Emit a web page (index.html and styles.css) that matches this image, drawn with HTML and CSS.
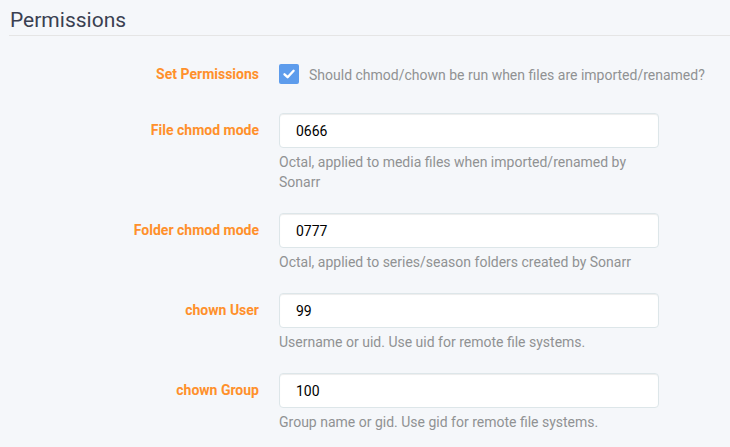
FILE: index.html
```html
<html>
  <head>
    <title>Media Management - Sonarr</title>
    <link rel="stylesheet" href="styles.css">
  </head>
  <body>
    <div class="section">
      <h2 class="legend">Permissions</h2>

      <div class="form-group">
        <label class="form-label">Set Permissions</label>
        <div class="form-input check-row">
          <span class="checkbox">
            <svg width="14" height="14" viewBox="0 0 14 14">
              <path d="M2.5 7.3 L5.6 10.2 L11.6 3.8" fill="none" stroke="#fff" stroke-width="2.4" stroke-linecap="round" stroke-linejoin="round"/>
            </svg>
          </span>
          <span class="check-help">Should chmod/chown be run when files are imported/renamed?</span>
        </div>
      </div>

      <div class="form-group">
        <label class="form-label">File chmod mode</label>
        <div class="form-input">
          <input type="text" class="text-input" value="0666">
          <div class="help">Octal, applied to media files when imported/renamed by Sonarr</div>
        </div>
      </div>

      <div class="form-group">
        <label class="form-label">Folder chmod mode</label>
        <div class="form-input">
          <input type="text" class="text-input" value="0777">
          <div class="help">Octal, applied to series/season folders created by Sonarr</div>
        </div>
      </div>

      <div class="form-group">
        <label class="form-label">chown User</label>
        <div class="form-input">
          <input type="text" class="text-input" value="99">
          <div class="help">Username or uid. Use uid for remote file systems.</div>
        </div>
      </div>

      <div class="form-group">
        <label class="form-label">chown Group</label>
        <div class="form-input">
          <input type="text" class="text-input" value="100">
          <div class="help">Group name or gid. Use gid for remote file systems.</div>
        </div>
      </div>
    </div>
  </body>
</html>
```

FILE: styles.css
```css
/* page */
body {
  margin: 0;
  padding: 0 0 0 9px;
  background-color: #f5f7fa;
  font-family: Roboto, "Open Sans", sans-serif;
  font-size: 14px;
  overflow: hidden;
}

.legend {
  margin: 5px 0 21px 0;
  padding: 0 0 0 1px;
  font-size: 21px;
  font-weight: normal;
  line-height: 30px;
  color: #3a3f51;
  border-bottom: 1px solid #e5e5e5;
}

/* form rows */
.form-group {
  display: flex;
  margin-bottom: 21px;
}

.form-label {
  flex: 0 0 250px;
  margin-right: 20px;
  line-height: 35px;
  text-align: right;
  font-weight: bold;
  color: #ff902b;
}

.form-input {
  width: 380px;
}

.check-row {
  display: flex;
  align-items: center;
  height: 35px;
  width: auto;
}

.checkbox {
  display: flex;
  align-items: center;
  justify-content: center;
  width: 20px;
  height: 20px;
  border-radius: 2px;
  background-color: #5d9cec;
  margin-top: -1px;
}

.check-help {
  margin-left: 10px;
  color: #909293;
}

.text-input {
  display: block;
  box-sizing: border-box;
  width: 380px;
  height: 35px;
  padding: 6px 16px;
  border: 1px solid #dde6e9;
  border-radius: 4px;
  background-color: #fff;
  box-shadow: inset 0 1px 1px rgba(0, 0, 0, 0.075);
  font-family: Roboto, "Open Sans", sans-serif;
  font-size: 14px;
  color: #000;
  outline: none;
}

.help {
  margin-top: 4px;
  line-height: 20px;
  color: #909293;
}
```
